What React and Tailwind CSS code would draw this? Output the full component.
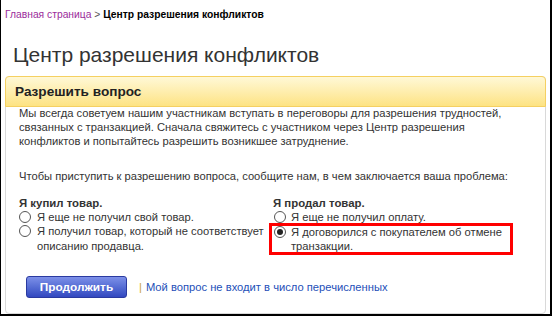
import React from "react";

function Radio({ checked }) {
  return (
    <span className="mt-[1px] inline-flex h-[12px] w-[12px] shrink-0 items-center justify-center rounded-full border border-[#555] bg-white">
      {checked && <span className="h-[6px] w-[6px] rounded-full bg-[#222]" />}
    </span>
  );
}

export default function App() {
  return (
    <div
      className="h-[316px] w-[552px] overflow-hidden border-l border-r-2 border-b-2 border-black bg-white text-[#333]"
      style={{ fontFamily: '"Liberation Sans", Arial, sans-serif' }}
    >
      <div className="pl-[4px] pt-[9px] text-[10.3px] leading-[12px]">
        <span className="text-[#9b2b9b]">Главная страница</span>
        <span className="text-[#555]"> &gt; </span>
        <span className="font-bold text-black">Центр разрешения конфликтов</span>
      </div>
      <h1 className="mt-[21px] pl-[12px] text-[21px] leading-[26px] font-normal text-[#333]">
        Центр разрешения конфликтов
      </h1>
      <div className="ml-[4px] mt-[8px] h-[238px] w-[541px] rounded-[4px] border border-[#d9d9d9]">
        <div className="-m-[1px] h-[31px] rounded-t-[4px] border border-[#f5d061] bg-gradient-to-b from-[#fff8d6] to-[#fde382] pl-[9px] pt-[7px] text-[13.6px] font-bold leading-[16px] text-[#222]">
          Разрешить вопрос
        </div>
        <div className="px-[13px] pt-0 text-[11.2px] leading-[14px]">
          <p className="w-[500px]">
            Мы всегда советуем нашим участникам вступать в переговоры для разрешения трудностей,
            связанных с транзакцией. Сначала свяжитесь с участником через Центр разрешения
            конфликтов и попытайтесь разрешить возникшее затруднение.
          </p>
          <p className="mt-[21px] w-[500px]">
            Чтобы приступить к разрешению вопроса, сообщите нам, в чем заключается ваша проблема:
          </p>
          <div className="mt-[14px] flex">
            <div className="w-[254px]">
              <div className="text-[11.4px] font-bold leading-[13px]">Я купил товар.</div>
              <label className="flex gap-[6px]">
                <Radio />
                <span>Я еще не получил свой товар.</span>
              </label>
              <label className="flex gap-[6px]">
                <Radio />
                <span className="leading-[15px]">Я получил товар, который не соответствует описанию продавца.</span>
              </label>
            </div>
            <div className="w-[240px]">
              <div className="text-[11.4px] font-bold leading-[13px]">Я продал товар.</div>
              <label className="flex gap-[5px] pl-[1px]">
                <Radio />
                <span>Я еще не получил оплату.</span>
              </label>
              <div className="-ml-[4px] -mt-[1px] h-[32px] w-[244px] border-[3px] border-[#ff0000] pl-[2px]">
                <label className="-mt-[1px] flex gap-[5px]">
                  <Radio checked />
                  <span className="leading-[14px]">Я договорился с покупателем об отмене транзакции.</span>
                </label>
              </div>
            </div>
          </div>
          <div className="mt-[21px] flex items-center pl-[9px]">
            <button className="-ml-[2px] h-[22px] w-[101px] rounded-[3px] border border-[#2a3aa0] bg-gradient-to-b from-[#7d90e8] to-[#3348c0] text-[11.8px] font-bold text-white">
              Продолжить
            </button>
            <span className="ml-[12px] text-[#c8a43a]">|</span>
            <span className="ml-[4px] text-[#2450b8]">Мой вопрос не входит в число перечисленных</span>
          </div>
        </div>
      </div>
    </div>
  );
}
